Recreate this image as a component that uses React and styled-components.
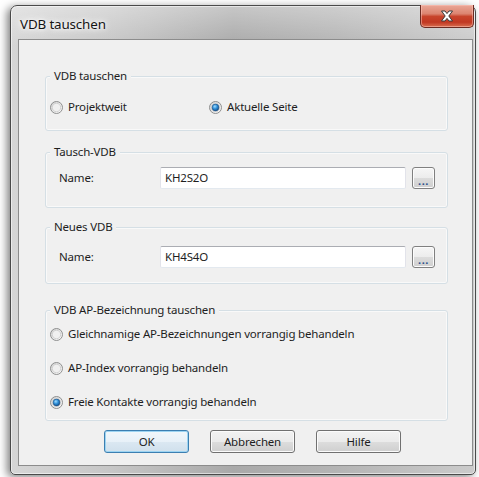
import React, { useId } from "react";
import styled, { createGlobalStyle } from "styled-components";

const GlobalStyle = createGlobalStyle`
  html, body { margin: 0; padding: 0; background: #ffffff; }
  body {
    font-family: "Noto Sans", "Open Sans", sans-serif;
    font-size: 11.5px;
    letter-spacing: -0.18px;
    color: #1e1e1e;
  }
  * { box-sizing: border-box; }
`;

const Stage = styled.div`
  width: 479px;
  height: 477px;
  padding: 5px 3px 2px 10px;
`;

const Window = styled.div`
  width: 466px;
  height: 470px;
  display: flex;
  flex-direction: column;
  padding: 0 2px 8px 7px;
  border: 1px solid #4a4a4a;
  border-radius: 7px 7px 5px 5px;
  background:
    linear-gradient(180deg, rgba(255, 255, 255, 0.35) 0%, rgba(255, 255, 255, 0) 40px),
    linear-gradient(90deg, #d6d6d6 0%, #c6c6c6 22%, #a9a9a9 48%, #b4b4b4 70%, #cbcbcb 100%);
  box-shadow:
    inset 0 0 0 1px rgba(255, 255, 255, 0.55),
    -3px 2px 9px rgba(0, 0, 0, 0.5);
`;

const TitleBar = styled.div`
  height: 33px;
  display: flex;
  align-items: flex-start;
  justify-content: space-between;
`;

const Title = styled.div`
  margin: 9px 0 0 2px;
  font-size: 13.4px;
  letter-spacing: -0.15px;
  line-height: 18px;
  color: #141414;
  text-shadow: 0 0 6px #ffffff, 0 0 10px #ffffff, 0 0 3px rgba(255, 255, 255, 0.9);
`;

const CloseButton = styled.div`
  width: 54px;
  height: 23px;
  margin: -1px -1px 0 0;
  display: flex;
  align-items: center;
  justify-content: center;
  border: 1px solid #6b2b22;
  border-top: none;
  border-radius: 0 0 5px 5px;
  background: linear-gradient(
    180deg,
    #eaa797 0%,
    #dc8470 40%,
    #c8442c 52%,
    #c13822 78%,
    #d86f50 100%
  );
  box-shadow: inset 0 0 0 1px rgba(255, 200, 190, 0.5);
`;

const Client = styled.div`
  flex: 1;
  display: flex;
  flex-direction: column;
  padding: 36px 24px 0 26px;
  background: #f0f0f0;
  border: 1px solid #8c8c8c;
`;

const GroupBox = styled.div`
  position: relative;
  height: ${(p) => p.$height}px;
  margin-top: ${(p) => p.$top || 0}px;
  padding: ${(p) => p.$padTop}px 0 0 ${(p) => p.$padLeft}px;
  display: flex;
  flex-direction: column;
  gap: ${(p) => p.$gap || 0}px;
  border: 1px solid #d5dfe5;
  border-radius: 3px;
  box-shadow: inset 0 0 0 1px rgba(255, 255, 255, 0.6);
`;

const Legend = styled.span`
  position: absolute;
  top: -9px;
  left: 4px;
  padding: 0 4px;
  line-height: 16px;
  background: #f0f0f0;
  color: #1e1e1e;
  white-space: nowrap;
`;

const RadioRow = styled.div`
  display: grid;
  grid-template-columns: 159px auto;
  align-items: center;
`;

const RadioLabel = styled.label`
  display: flex;
  align-items: center;
  gap: 5px;
  height: 16px;
  line-height: 16px;
  white-space: nowrap;
  svg { flex: none; }
`;

const FieldRow = styled.div`
  display: flex;
  align-items: center;
  height: 22px;
`;

const FieldLabel = styled.span`
  width: 101px;
  line-height: 16px;
`;

const TextBox = styled.div`
  width: 246px;
  height: 22px;
  display: flex;
  align-items: center;
  padding-left: 4px;
  background: #ffffff;
  border: 1px solid #e2e3ea;
  border-top-color: #abadb3;
  border-bottom-color: #e3e9ef;
  border-radius: 2px;
  line-height: 16px;
`;

const BrowseButton = styled.div`
  width: 23px;
  height: 22px;
  margin-left: 6px;
  display: flex;
  align-items: flex-end;
  justify-content: center;
  padding-bottom: 3px;
  border: 1px solid #808080;
  border-radius: 3px;
  background: linear-gradient(180deg, #f6f6f6 0%, #ececec 50%, #dcdcdc 51%, #cfcfcf 100%);
  box-shadow: inset 0 0 0 1px #fcfcfc;
  font-size: 11px;
  line-height: 8px;
  letter-spacing: 0.5px;
  color: #2d4f8c;
  font-weight: 700;
`;

const ButtonRow = styled.div`
  display: flex;
  gap: 21px;
  margin: 9px 0 0 59px;
`;

const Button = styled.div`
  width: 85px;
  height: 23px;
  display: flex;
  align-items: center;
  justify-content: center;
  border: 1px solid ${(p) => (p.$default ? "#3c7fb1" : "#707070")};
  border-radius: 3px;
  background: ${(p) =>
    p.$default
      ? "linear-gradient(180deg, #f1f7fb 0%, #e8f1f8 50%, #dbe8f2 51%, #d0e0ec 100%)"
      : "linear-gradient(180deg, #f2f2f2 0%, #ebebeb 50%, #dddddd 51%, #cfcfcf 100%)"};
  box-shadow: ${(p) =>
    p.$default ? "inset 0 0 0 1px #9dd4f2" : "inset 0 0 0 1px #fbfbfb"};
  line-height: 16px;
  color: #1e1e1e;
`;

function CloseGlyph() {
  return (
    <svg width="14" height="12" viewBox="0 0 14 12">
      <path
        d="M1.5 1 H5 L7 3.6 L9 1 H12.5 L8.8 6 L12.5 11 H9 L7 8.4 L5 11 H1.5 L5.2 6 Z"
        fill="#ffffff"
        stroke="#3a3a3a"
        strokeWidth="1"
        strokeLinejoin="round"
      />
    </svg>
  );
}

function Radio({ checked, children }) {
  const id = useId().replace(/[^a-zA-Z0-9]/g, "");
  return (
    <RadioLabel>
      <svg width="13" height="13" viewBox="0 0 13 13">
        <defs>
          <linearGradient id={`ring${id}`} x1="0" y1="0" x2="1" y2="1">
            <stop offset="0" stopColor="#cfcfcf" />
            <stop offset="1" stopColor="#ffffff" />
          </linearGradient>
          <radialGradient id={`dot${id}`} cx="0.4" cy="0.35" r="0.75">
            <stop offset="0" stopColor="#9fdcff" />
            <stop offset="0.45" stopColor="#2f8fd8" />
            <stop offset="1" stopColor="#0c3f78" />
          </radialGradient>
        </defs>
        <circle cx="6.5" cy="6.5" r="6" fill={`url(#ring${id})`} stroke="#8e8f8f" />
        <circle cx="6.5" cy="6.5" r="4.2" fill="#f0f0f0" stroke="#cacaca" strokeWidth="0.8" />
        {checked && (
          <circle cx="6.5" cy="6.5" r="3.4" fill={`url(#dot${id})`} stroke="#1b4d80" strokeWidth="0.6" />
        )}
      </svg>
      <span>{children}</span>
    </RadioLabel>
  );
}

export default function App() {
  return (
    <>
      <GlobalStyle />
      <Stage>
        <Window>
          <TitleBar>
            <Title>VDB tauschen</Title>
            <CloseButton>
              <CloseGlyph />
            </CloseButton>
          </TitleBar>
          <Client>
            <GroupBox $height={55} $padTop={22} $padLeft={4}>
              <Legend>VDB tauschen</Legend>
              <RadioRow>
                <Radio>Projektweit</Radio>
                <Radio checked>Aktuelle Seite</Radio>
              </RadioRow>
            </GroupBox>

            <GroupBox $top={21} $height={56} $padTop={14} $padLeft={13}>
              <Legend>Tausch-VDB</Legend>
              <FieldRow>
                <FieldLabel>Name:</FieldLabel>
                <TextBox>KH2S2O</TextBox>
                <BrowseButton>...</BrowseButton>
              </FieldRow>
            </GroupBox>

            <GroupBox $top={19} $height={57} $padTop={18} $padLeft={13}>
              <Legend>Neues VDB</Legend>
              <FieldRow>
                <FieldLabel>Name:</FieldLabel>
                <TextBox>KH4S4O</TextBox>
                <BrowseButton>...</BrowseButton>
              </FieldRow>
            </GroupBox>

            <GroupBox $top={26} $height={111} $padTop={15} $padLeft={4} $gap={18}>
              <Legend>VDB AP-Bezeichnung tauschen</Legend>
              <Radio>Gleichnamige AP-Bezeichnungen vorrangig behandeln</Radio>
              <Radio>AP-Index vorrangig behandeln</Radio>
              <Radio checked>Freie Kontakte vorrangig behandeln</Radio>
            </GroupBox>

            <ButtonRow>
              <Button $default>OK</Button>
              <Button>Abbrechen</Button>
              <Button>Hilfe</Button>
            </ButtonRow>
          </Client>
        </Window>
      </Stage>
    </>
  );
}
